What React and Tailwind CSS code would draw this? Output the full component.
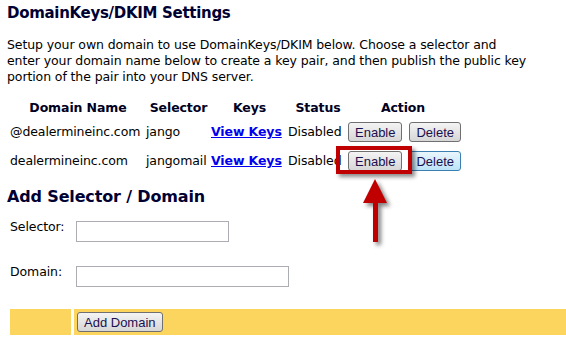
import React from "react";

const btn =
  "h-[20px] px-[6px] rounded-[3px] border border-[#707070] bg-linear-to-b from-[#f4f4f4] to-[#d6d6d6] text-[#1b0f4f] font-['Liberation_Sans',Arial,sans-serif] text-[13px] tracking-normal leading-none";
const btnHover =
  "h-[20px] px-[6px] rounded-[3px] border border-[#3c7fb1] bg-linear-to-b from-[#eaf6fd] to-[#bde4f8] text-[#1b0f4f] font-['Liberation_Sans',Arial,sans-serif] text-[13px] tracking-normal leading-none";

const rows = [
  { domain: "@dealermineinc.com", selector: "jango", hover: false },
  { domain: "dealermineinc.com", selector: "jangomail", hover: true },
];

const App = () => {
  return (
    <div className="relative w-[566px] h-[341px] overflow-hidden bg-white font-['DejaVu_Sans',Verdana,sans-serif] text-[12.5px] tracking-[-0.1px] text-black">
      <h1 className="pl-[7px] pt-[2px] text-[15px] tracking-[-0.3px] leading-[22px] font-bold text-[#000033]">
        DomainKeys/DKIM Settings
      </h1>
      <p className="mt-[13px] pl-[7px] leading-[16px] whitespace-nowrap">
        Setup your own domain to use DomainKeys/DKIM below. Choose a selector and
        <br />
        enter your domain name below to create a key pair, and then publish the public key
        <br />
        portion of the pair into your DNS server.
      </p>

      {/* domain table */}
      <div className="mt-[13px] ml-[10px]">
        <div className="grid grid-cols-[136px_65px_77px_60px_112px] h-[20px] items-center font-bold text-center text-[#000022]">
          <div>Domain Name</div>
          <div>Selector</div>
          <div>Keys</div>
          <div>Status</div>
          <div className="pr-[2px]">Action</div>
        </div>
        {rows.map((r, i) => (
          <div
            key={r.domain}
            className={`grid grid-cols-[136px_65px_77px_60px_112px] h-[20px] items-center whitespace-nowrap ${i === 0 ? "mt-[4px]" : "mt-[9px]"}`}
          >
            <div>{r.domain}</div>
            <div>{r.selector}</div>
            <div>
              <a href="#" className="font-bold text-[#0000ee] underline">
                View Keys
              </a>
            </div>
            <div>Disabled</div>
            <div className="flex gap-[7px]">
              <button className={btn}>Enable</button>
              <button className={r.hover ? btnHover : btn}>Delete</button>
            </div>
          </div>
        ))}
      </div>

      <h2 className="mt-[15px] pl-[7px] text-[16px] tracking-[-0.15px] leading-[22px] font-bold text-[#000033]">
        Add Selector / Domain
      </h2>

      <div className="mt-[13px] pl-[10px] flex items-start">
        <label className="w-[66px] leading-[16px] -mt-[2px]">Selector:</label>
        <input className="w-[153px] h-[21px] border border-[#abadb3] bg-white" />
      </div>
      <div className="mt-[24px] pl-[10px] flex items-start">
        <label className="w-[66px] leading-[16px] -mt-[2px]">Domain:</label>
        <input className="w-[213px] h-[21px] border border-[#abadb3] bg-white" />
      </div>

      <div className="mt-[22px] pl-[10px] flex h-[26px] gap-[3px]">
        <div className="w-[61px] bg-[#fcd55e]" />
        <div className="flex-1 bg-[#fcd55e] flex items-center pl-[3px]">
          <button className={btn}>Add Domain</button>
        </div>
      </div>

      {/* callout highlight */}
      <div className="absolute left-[336px] top-[146px] w-[76px] h-[28px] border-4 border-[#c00000] shadow-[3px_3px_4px_rgba(0,0,0,0.45)]" />
      <svg
        className="absolute left-[355px] top-[172px] drop-shadow-[3px_3px_2px_rgba(0,0,0,0.5)]"
        width="45"
        height="80"
        viewBox="0 0 45 80"
      >
        <polygon points="20,7 8,31 32,31" fill="#c00000" />
        <rect x="18" y="30" width="5" height="40" fill="#c00000" />
      </svg>
    </div>
  );
};

export default App;
